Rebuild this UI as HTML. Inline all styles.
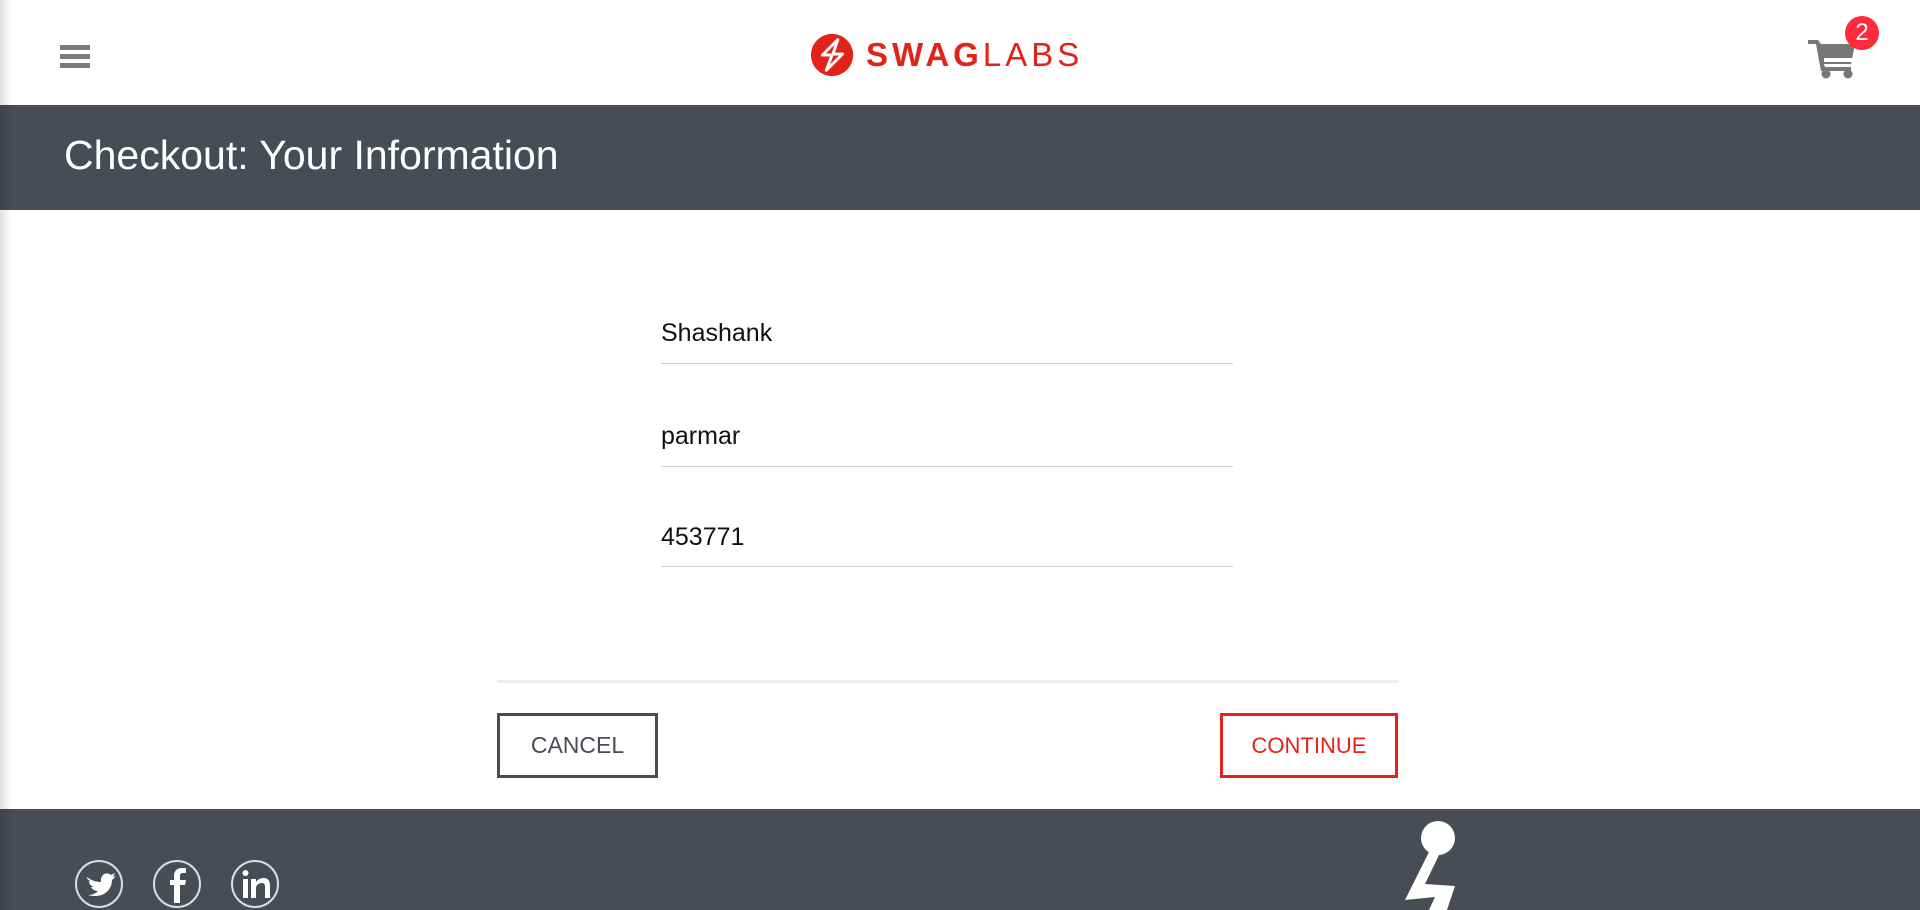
<!DOCTYPE html>
<html><head><meta charset="utf-8"><style>
*{margin:0;padding:0;box-sizing:border-box}
body{width:1920px;height:910px;overflow:hidden;background:#fff;font-family:"Liberation Sans",Arial,sans-serif;position:relative}
.abs{position:absolute}
.shadow{left:0;top:0;width:12px;height:910px;background:linear-gradient(to right,rgba(0,0,0,0.12),rgba(0,0,0,0));z-index:5}
.bar{left:60px;width:30px;height:5px;background:#7a7a7a}
.title{left:0;top:105px;width:1920px;height:105px;background:#474c55;color:#fff;font-size:41px;line-height:100px;padding-left:64px}
.inp{left:661px;width:572px;border-bottom:1px solid #d0d0d0;font-size:25px;color:#111}
.btn{top:713px;height:65px;border:3px solid;font-size:23px;text-align:center;line-height:59px}
.footer{left:0;top:809px;width:1920px;height:101px;background:#474c55}
</style></head><body>
<div class="abs shadow"></div>
<div class="abs bar" style="top:45px"></div>
<div class="abs bar" style="top:54px"></div>
<div class="abs bar" style="top:63px"></div>
<svg class="abs" style="left:809px;top:31px" width="48" height="48" viewBox="0 0 50 50">
<circle cx="24" cy="25" r="22" fill="#e2231a"/>
<path d="M30 9 L14 25 L24 25 L18 41 L35 24 L25 24 Z" fill="none" stroke="#fff" stroke-width="3" stroke-linejoin="round"/>
</svg>
<div class="abs" style="left:866px;top:30px;font-size:33px;color:#e2231a;letter-spacing:4px;line-height:50px"><b>SWAG</b>LABS</div>
<svg class="abs" style="left:1806px;top:34px" width="52" height="46" viewBox="0 0 52 46">
<path d="M2 6 H12 L15 10 H49 L45 30 H18 L19 33 H45 V37 H15 L10 10 H2 Z" fill="#777"/>
<circle cx="20" cy="40" r="4.5" fill="#777"/><circle cx="42" cy="40" r="4.5" fill="#777"/>
<rect x="18" y="24" width="28" height="4" fill="#fff"/>
</svg>
<div class="abs" style="left:1845px;top:16px;width:34px;height:34px;border-radius:50%;background:#ff2a3a;color:#fff;font-size:24px;text-align:center;line-height:34px">2</div>
<div class="abs title">Checkout: Your Information</div>
<div class="abs inp" style="top:314px;height:50px;padding-top:5px">Shashank</div>
<div class="abs inp" style="top:417px;height:50px;padding-top:5px">parmar</div>
<div class="abs inp" style="top:518px;height:49px;padding-top:5px">453771</div>
<div class="abs" style="left:497px;top:680px;width:901px;height:3px;background:#ededed"></div>
<div class="abs btn" style="left:497px;width:161px;border-color:#474c55;color:#474c55">CANCEL</div>
<div class="abs btn" style="left:1220px;width:178px;border-color:#e2231a;color:#e2231a;font-size:22px">CONTINUE</div>
<div class="abs footer"></div>
<svg class="abs" style="left:0;top:809px" width="320" height="101" viewBox="0 0 320 101">
<g fill="none" stroke="#ddd" stroke-width="2"><circle cx="99" cy="75" r="23"/><circle cx="177" cy="75" r="23"/><circle cx="255" cy="75" r="23"/></g>
<path d="M87 68 C92 72 97 73 101 73 C100 66 106 62 111 66 L115 64 L113 68 L116 67 L112 71 C112 82 102 90 88 86 C93 86 96 84 98 82 C94 82 92 80 91 78 L94 78 C90 77 89 74 89 72 L92 73 C88 71 87 70 87 68 Z" fill="#fff"/>
<path d="M180 94 V76 H185 L186 71 H180 V67 C180 65 181 64 183 64 H186 V59 H182 C177 59 174 62 174 67 V71 H170 V76 H174 V94 Z" fill="#fff"/>
<rect x="243" y="70" width="5" height="19" fill="#fff"/><circle cx="245.5" cy="64" r="3" fill="#fff"/>
<path d="M251 89 V70 H256 V73 C258 70 261 69 264 69 C268 69 270 72 270 77 V89 H265 V78 C265 75 264 74 262 74 C259 74 256 76 256 79 V89 Z" fill="#fff"/>
</svg>
<svg class="abs" style="left:1395px;top:809px" width="70" height="101" viewBox="0 0 70 101">
<circle cx="43" cy="29" r="17" fill="#fff"/>
<path d="M34 43 L44 46 L30 75 L60 77 L52 101 L34 101 L40 88 L10 91 Z" fill="#fff"/>
</svg>
</body></html>
